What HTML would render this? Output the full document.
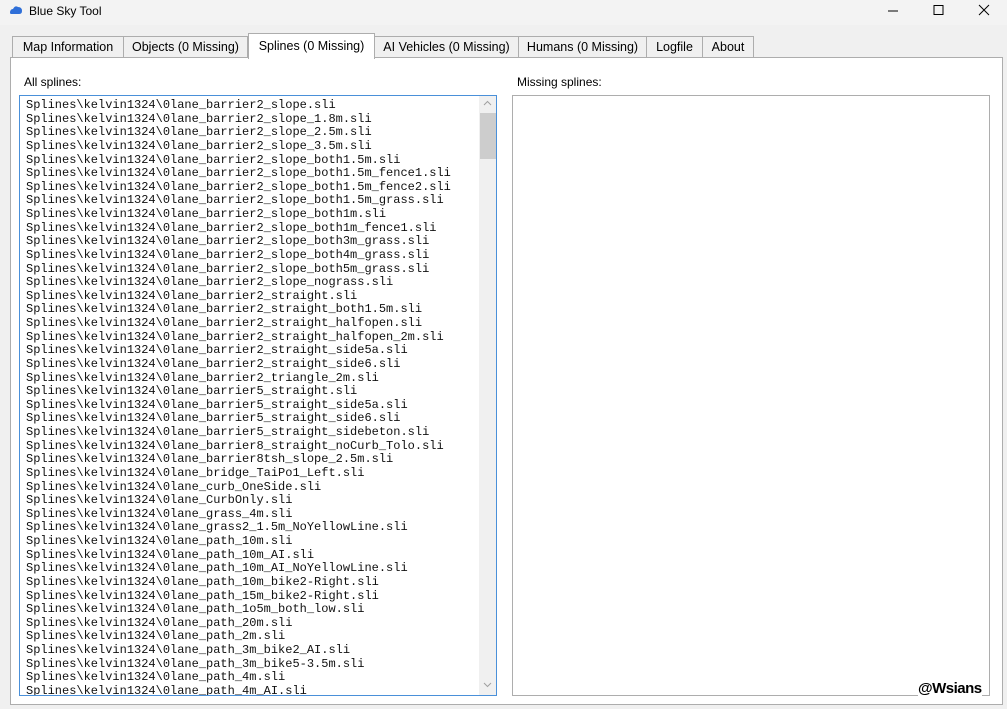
<!DOCTYPE html><html><head><style>
body{margin:0;width:1007px;height:709px;background:#f0f0f0;font-family:"Liberation Sans",sans-serif;position:relative;overflow:hidden}
.t{position:absolute;left:0;top:0;width:1007px;height:25px;background:#f3f3f3;font-size:12px}
.tab{position:absolute;top:36px;height:21px;border:1px solid #adadad;border-bottom:none;background:#f0f0f0;font-size:12.5px;line-height:21px;text-align:center;color:#000;box-sizing:border-box}
.sel{top:33px;height:26px;background:#fff;z-index:2;line-height:25px}
.panel{position:absolute;left:10px;top:57px;width:993px;height:648px;background:#fff;border:1px solid #adadad;box-sizing:border-box}
.lbl{position:absolute;font-size:12px;color:#000}
.lb{position:absolute;top:95px;width:478px;height:601px;box-sizing:border-box;background:#fff}
pre{margin:0;position:absolute;left:6px;top:3px;font-family:"Liberation Mono",monospace;font-size:12px;line-height:13.62px;color:#111}
</style></head><body>
<div class="t"><svg style="position:absolute;left:9px;top:5px" width="14" height="10"><path d="M1 8 Q1 4 4 4 Q6 0 9 2 Q13 2 13 6 Q13 9 10 9 L3 9 Q1 9 1 8Z" fill="#2f6fd8"/></svg><span style="position:absolute;left:29px;top:4px">Blue Sky Tool</span>
<svg style="position:absolute;left:886px;top:3px" width="110" height="14"><line x1="2" y1="8" x2="12" y2="8" stroke="#000"/><rect x="48" y="2.5" width="9" height="9" fill="none" stroke="#000"/><path d="M93 2L103 12M103 2L93 12" stroke="#000"/></svg></div>
<div class="panel"></div>
<div class="tab" style="left:12px;width:112px">Map Information</div>
<div class="tab" style="left:123px;width:125px">Objects (0 Missing)</div>
<div class="tab sel" style="left:248px;width:127px">Splines (0 Missing)</div>
<div class="tab" style="left:374px;width:145px">AI Vehicles (0 Missing)</div>
<div class="tab" style="left:518px;width:129px">Humans (0 Missing)</div>
<div class="tab" style="left:646px;width:57px">Logfile</div>
<div class="tab" style="left:702px;width:52px">About</div>
<div class="lbl" style="left:24px;top:75px">All splines:</div>
<div class="lbl" style="left:517px;top:75px">Missing splines:</div>
<div class="lb" style="left:19px;border:1px solid #4a90d9;overflow:hidden"><pre>Splines\kelvin1324\0lane_barrier2_slope.sli
Splines\kelvin1324\0lane_barrier2_slope_1.8m.sli
Splines\kelvin1324\0lane_barrier2_slope_2.5m.sli
Splines\kelvin1324\0lane_barrier2_slope_3.5m.sli
Splines\kelvin1324\0lane_barrier2_slope_both1.5m.sli
Splines\kelvin1324\0lane_barrier2_slope_both1.5m_fence1.sli
Splines\kelvin1324\0lane_barrier2_slope_both1.5m_fence2.sli
Splines\kelvin1324\0lane_barrier2_slope_both1.5m_grass.sli
Splines\kelvin1324\0lane_barrier2_slope_both1m.sli
Splines\kelvin1324\0lane_barrier2_slope_both1m_fence1.sli
Splines\kelvin1324\0lane_barrier2_slope_both3m_grass.sli
Splines\kelvin1324\0lane_barrier2_slope_both4m_grass.sli
Splines\kelvin1324\0lane_barrier2_slope_both5m_grass.sli
Splines\kelvin1324\0lane_barrier2_slope_nograss.sli
Splines\kelvin1324\0lane_barrier2_straight.sli
Splines\kelvin1324\0lane_barrier2_straight_both1.5m.sli
Splines\kelvin1324\0lane_barrier2_straight_halfopen.sli
Splines\kelvin1324\0lane_barrier2_straight_halfopen_2m.sli
Splines\kelvin1324\0lane_barrier2_straight_side5a.sli
Splines\kelvin1324\0lane_barrier2_straight_side6.sli
Splines\kelvin1324\0lane_barrier2_triangle_2m.sli
Splines\kelvin1324\0lane_barrier5_straight.sli
Splines\kelvin1324\0lane_barrier5_straight_side5a.sli
Splines\kelvin1324\0lane_barrier5_straight_side6.sli
Splines\kelvin1324\0lane_barrier5_straight_sidebeton.sli
Splines\kelvin1324\0lane_barrier8_straight_noCurb_Tolo.sli
Splines\kelvin1324\0lane_barrier8tsh_slope_2.5m.sli
Splines\kelvin1324\0lane_bridge_TaiPo1_Left.sli
Splines\kelvin1324\0lane_curb_OneSide.sli
Splines\kelvin1324\0lane_CurbOnly.sli
Splines\kelvin1324\0lane_grass_4m.sli
Splines\kelvin1324\0lane_grass2_1.5m_NoYellowLine.sli
Splines\kelvin1324\0lane_path_10m.sli
Splines\kelvin1324\0lane_path_10m_AI.sli
Splines\kelvin1324\0lane_path_10m_AI_NoYellowLine.sli
Splines\kelvin1324\0lane_path_10m_bike2-Right.sli
Splines\kelvin1324\0lane_path_15m_bike2-Right.sli
Splines\kelvin1324\0lane_path_1o5m_both_low.sli
Splines\kelvin1324\0lane_path_20m.sli
Splines\kelvin1324\0lane_path_2m.sli
Splines\kelvin1324\0lane_path_3m_bike2_AI.sli
Splines\kelvin1324\0lane_path_3m_bike5-3.5m.sli
Splines\kelvin1324\0lane_path_4m.sli
Splines\kelvin1324\0lane_path_4m_AI.sli</pre>
<div style="position:absolute;right:0;top:0;width:17px;height:599px;background:#f0f0f0"><div style="position:absolute;left:1px;top:17px;width:16px;height:46px;background:#cdcdcd"></div><svg style="position:absolute;left:4px;top:4px" width="9" height="6"><path d="M1 5L4.5 1.5L8 5" stroke="#a0a0a0" fill="none"/></svg><svg style="position:absolute;left:4px;top:586px" width="9" height="6"><path d="M1 1L4.5 4.5L8 1" stroke="#a0a0a0" fill="none"/></svg></div></div>
<div class="lb" style="left:512px;border:1px solid #adadad"></div>
<div style="position:absolute;left:918px;top:680px;font:bold 15px 'Liberation Sans',sans-serif;color:#000;background:#fff;letter-spacing:-0.5px">@Wsians</div>
</body></html>
